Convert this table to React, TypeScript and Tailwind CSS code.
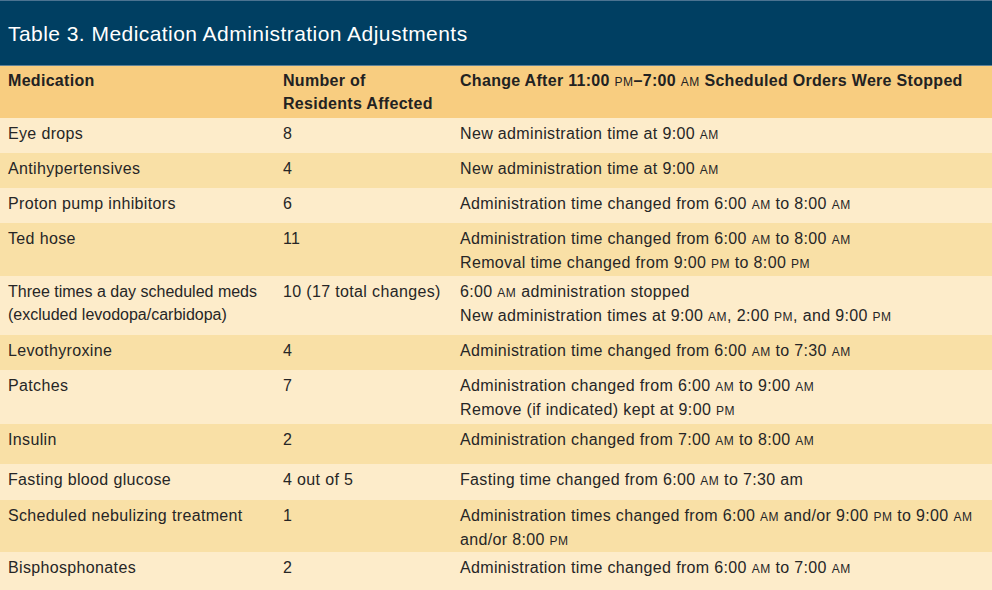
import React from 'react';

type Row = { med: string[]; num: string; change: string[]; h: string; dark: boolean };

const rows: Row[] = [
    { med: ['Eye drops'], num: '8', change: ['New administration time at 9:00 AM'], h: 'h-[35px]', dark: false },
    { med: ['Antihypertensives'], num: '4', change: ['New administration time at 9:00 AM'], h: 'h-[35px]', dark: true },
    { med: ['Proton pump inhibitors'], num: '6', change: ['Administration time changed from 6:00 AM to 8:00 AM'], h: 'h-[35px]', dark: false },
    { med: ['Ted hose'], num: '11', change: ['Administration time changed from 6:00 AM to 8:00 AM', 'Removal time changed from 9:00 PM to 8:00 PM'], h: 'h-[53px]', dark: true },
    { med: ['Three times a day scheduled meds', '(excluded levodopa/carbidopa)'], num: '10 (17 total changes)', change: ['6:00 AM administration stopped', 'New administration times at 9:00 AM, 2:00 PM, and 9:00 PM'], h: 'h-[59px]', dark: false },
    { med: ['Levothyroxine'], num: '4', change: ['Administration time changed from 6:00 AM to 7:30 AM'], h: 'h-[35px]', dark: true },
    { med: ['Patches'], num: '7', change: ['Administration changed from 6:00 AM to 9:00 AM', 'Remove (if indicated) kept at 9:00 PM'], h: 'h-[54px]', dark: false },
    { med: ['Insulin'], num: '2', change: ['Administration changed from 7:00 AM to 8:00 AM'], h: 'h-[40px]', dark: true },
    { med: ['Fasting blood glucose'], num: '4 out of 5', change: ['Fasting time changed from 6:00 AM to 7:30 am'], h: 'h-[36px]', dark: false },
    { med: ['Scheduled nebulizing treatment'], num: '1', change: ['Administration times changed from 6:00 AM and/or 9:00 PM to 9:00 AM', 'and/or 8:00 PM'], h: 'h-[52px]', dark: true },
    { med: ['Bisphosphonates'], num: '2', change: ['Administration time changed from 6:00 AM to 7:00 AM'], h: 'h-[40px]', dark: false },
];

// render AM / PM as small caps
function SmallCaps({ text }: { text: string }) {
    const parts = text.split(/\b(AM|PM)\b/);
    return (
        <>
            {parts.map((p, i) =>
                p === 'AM' || p === 'PM' ? (
                    <span key={i} className="text-[12px] font-normal tracking-[0.5px]">{p}</span>
                ) : (
                    <span key={i}>{p}</span>
                )
            )}
        </>
    );
}

export default function App() {
    return (
        <div className="w-[992px] h-[590px] overflow-hidden bg-[#fdecca] font-['Liberation_Sans',Arial,sans-serif] text-[#262626]">
            <div className="h-[66px] bg-[#003f62] border-t border-[#4b7391] border-b border-b-[#5f8196] flex items-center pl-[8px]">
                <h1 className="text-white text-[21px] tracking-[0.45px] pt-[1px]">Table 3. Medication Administration Adjustments</h1>
            </div>

            <div className="grid grid-cols-[275px_177px_1fr] h-[52px] bg-[#f8cd80] text-[16px] tracking-[0.3px] font-bold leading-[23px] text-[#222] pt-[3px]">
                <div className="pl-[8px]">Medication</div>
                <div className="pl-[8px]">Number of<br />Residents Affected</div>
                <div className="pl-[8px]"><SmallCaps text="Change After 11:00 PM–7:00 AM Scheduled Orders Were Stopped" /></div>
            </div>

            {rows.map((r, i) => (
                <div
                    key={i}
                    className={`grid grid-cols-[275px_177px_1fr] text-[16px] tracking-[0.35px] leading-[22.5px] pt-[5px] ${r.h} ${r.dark ? 'bg-[#f9e0a6]' : 'bg-[#fdecca]'}`}
                >
                    <div className="pl-[8px] whitespace-nowrap">
                        {r.med.map((m, j) => <div key={j} className={r.med.length > 1 ? 'tracking-[0px]' : ''}>{m}</div>)}
                    </div>
                    <div className="pl-[8px] whitespace-nowrap">{r.num}</div>
                    <div className="pl-[8px] whitespace-nowrap">
                        {r.change.map((c, j) => <div key={j}><SmallCaps text={c} /></div>)}
                    </div>
                </div>
            ))}
        </div>
    );
}
